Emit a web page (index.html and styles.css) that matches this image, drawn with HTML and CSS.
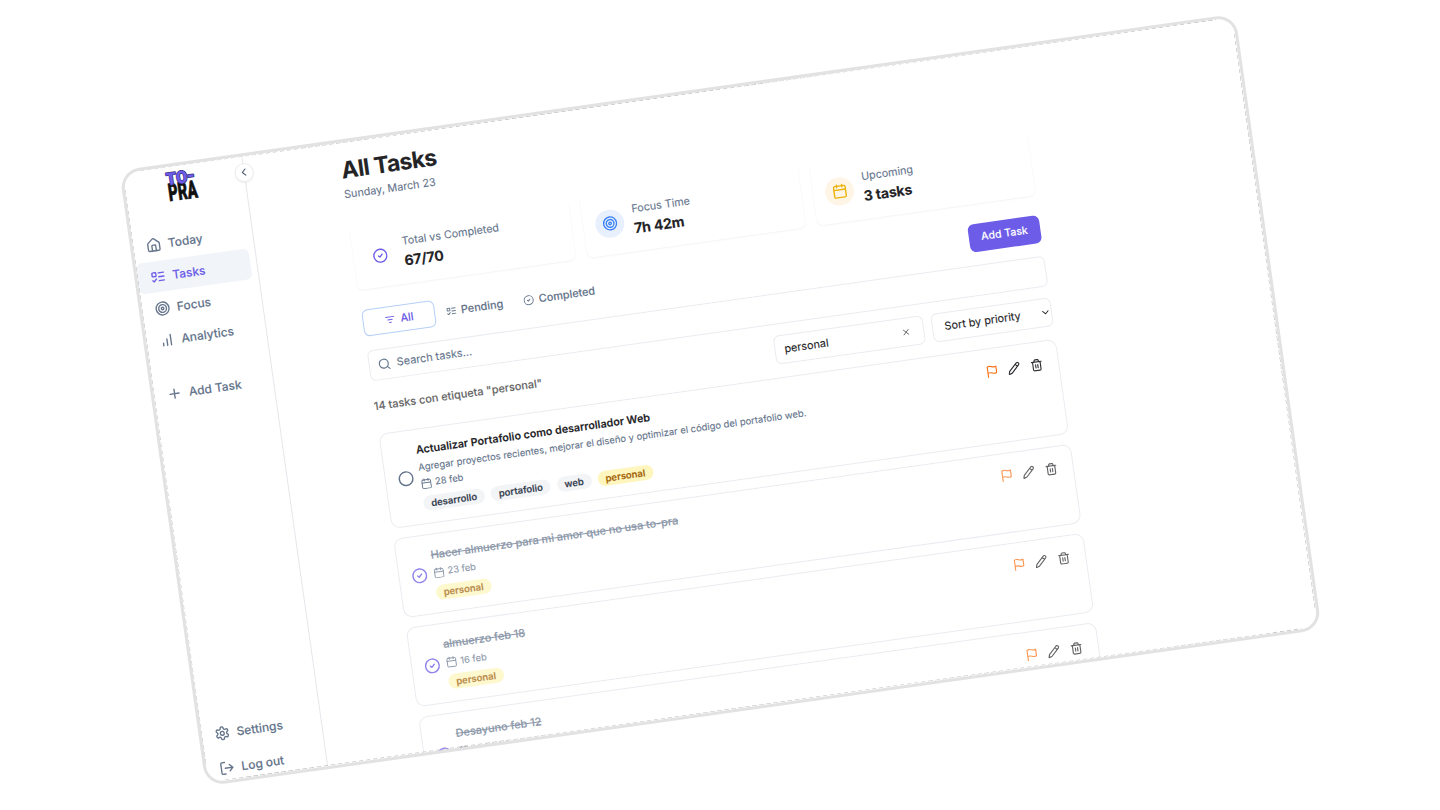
FILE: index.html
```html
<!DOCTYPE html>
<html lang="en">
<head>
<meta charset="utf-8">
<title>All Tasks</title>
<link rel="stylesheet" href="styles.css">
</head>
<body>
<svg class="sprite" aria-hidden="true">
  <symbol id="home" viewBox="0 0 24 24"><path d="M15 21v-8a1 1 0 0 0-1-1h-4a1 1 0 0 0-1 1v8"/><path d="M3 10a2 2 0 0 1 .709-1.528l7-5.999a2 2 0 0 1 2.582 0l7 5.999A2 2 0 0 1 21 10v9a2 2 0 0 1-2 2H5a2 2 0 0 1-2-2z"/></symbol>
  <symbol id="todo" viewBox="0 0 24 24"><rect x="3" y="5" width="6" height="6" rx="1"/><path d="m3 17 2 2 4-4M13 6h8M13 12h8M13 18h8"/></symbol>
  <symbol id="target" viewBox="0 0 24 24"><circle cx="12" cy="12" r="10"/><circle cx="12" cy="12" r="6"/><circle cx="12" cy="12" r="2"/></symbol>
  <symbol id="bars" viewBox="0 0 24 24"><path d="M12 20V10M18 20V4M6 20v-4"/></symbol>
  <symbol id="plus" viewBox="0 0 24 24"><path d="M5 12h14M12 5v14"/></symbol>
  <symbol id="gear" viewBox="0 0 24 24"><path d="M12.22 2h-.44a2 2 0 0 0-2 2v.18a2 2 0 0 1-1 1.73l-.43.25a2 2 0 0 1-2 0l-.15-.08a2 2 0 0 0-2.73.73l-.22.38a2 2 0 0 0 .73 2.73l.15.1a2 2 0 0 1 1 1.72v.51a2 2 0 0 1-1 1.74l-.15.09a2 2 0 0 0-.73 2.73l.22.38a2 2 0 0 0 2.73.73l.15-.08a2 2 0 0 1 2 0l.43.25a2 2 0 0 1 1 1.73V20a2 2 0 0 0 2 2h.44a2 2 0 0 0 2-2v-.18a2 2 0 0 1 1-1.73l.43-.25a2 2 0 0 1 2 0l.15.08a2 2 0 0 0 2.73-.73l.22-.39a2 2 0 0 0-.73-2.73l-.15-.08a2 2 0 0 1-1-1.74v-.5a2 2 0 0 1 1-1.74l.15-.09a2 2 0 0 0 .73-2.73l-.22-.38a2 2 0 0 0-2.73-.73l-.15.08a2 2 0 0 1-2 0l-.43-.25a2 2 0 0 1-1-1.73V4a2 2 0 0 0-2-2z"/><circle cx="12" cy="12" r="3"/></symbol>
  <symbol id="logout" viewBox="0 0 24 24"><path d="M9 21H5a2 2 0 0 1-2-2V5a2 2 0 0 1 2-2h4M16 17l5-5-5-5M21 12H9"/></symbol>
  <symbol id="check" viewBox="0 0 24 24"><circle cx="12" cy="12" r="10"/><path d="m9 12 2 2 4-4"/></symbol>
  <symbol id="circle" viewBox="0 0 24 24"><circle cx="12" cy="12" r="10"/></symbol>
  <symbol id="calendar" viewBox="0 0 24 24"><path d="M8 2v4M16 2v4M3 10h18"/><rect x="3" y="4" width="18" height="18" rx="2"/></symbol>
  <symbol id="filter" viewBox="0 0 24 24"><path d="M3 6h18M7 12h10M10 18h4"/></symbol>
  <symbol id="search" viewBox="0 0 24 24"><circle cx="11" cy="11" r="8"/><path d="m21 21-4.3-4.3"/></symbol>
  <symbol id="x" viewBox="0 0 24 24"><path d="M18 6 6 18M6 6l12 12"/></symbol>
  <symbol id="down" viewBox="0 0 24 24"><path d="m6 9 6 6 6-6"/></symbol>
  <symbol id="left" viewBox="0 0 24 24"><path d="m15 18-6-6 6-6"/></symbol>
  <symbol id="flag" viewBox="0 0 24 24"><path d="M4 15s1-1 4-1 5 2 8 2 4-1 4-1V3s-1 1-4 1-5-2-8-2-4 1-4 1zM4 22v-7"/></symbol>
  <symbol id="pencil" viewBox="0 0 24 24"><path d="M21.174 6.812a1 1 0 0 0-3.986-3.987L3.842 16.174a2 2 0 0 0-.5.83l-1.321 4.352a.5.5 0 0 0 .623.622l4.353-1.32a2 2 0 0 0 .83-.497zM15 5l4 4"/></symbol>
  <symbol id="trash" viewBox="0 0 24 24"><path d="M3 6h18M19 6v14c0 1-1 2-2 2H7c-1 0-2-1-2-2V6M8 6V4c0-1 1-2 2-2h4c1 0 2 1 2 2v2M10 11v6M14 11v6"/></symbol>
</svg>

<div class="frame">
  <aside class="sidebar">
    <svg class="logo" viewBox="0 0 36 36">
      <text class="logo-pra" x="2.6" y="31.6" textLength="29" lengthAdjust="spacingAndGlyphs">PRA</text>
      <text class="logo-to" x="2.4" y="15.2" textLength="21" lengthAdjust="spacingAndGlyphs">TO</text>
      <text class="logo-to" x="22.8" y="14.4" textLength="8.4" lengthAdjust="spacingAndGlyphs">-</text>
    </svg>
    <nav class="nav">
      <a class="nav-item"><svg class="icon"><use href="#home"/></svg>Today</a>
      <a class="nav-item active"><svg class="icon"><use href="#todo"/></svg>Tasks</a>
      <a class="nav-item"><svg class="icon"><use href="#target"/></svg>Focus</a>
      <a class="nav-item"><svg class="icon"><use href="#bars"/></svg>Analytics</a>
      <a class="nav-item add"><svg class="icon"><use href="#plus"/></svg>Add Task</a>
    </nav>
    <nav class="nav nav-bottom">
      <a class="nav-item"><svg class="icon"><use href="#gear"/></svg>Settings</a>
      <a class="nav-item"><svg class="icon"><use href="#logout"/></svg>Log out</a>
    </nav>
    <button class="toggle"><svg class="icon"><use href="#left"/></svg></button>
  </aside>

  <main class="main">
    <h1 class="title">All Tasks</h1>
    <p class="date">Sunday, March 23</p>

    <section class="stats">
      <div class="stat"><span class="badge"><svg class="icon violet"><use href="#check"/></svg></span><div><p class="label">Total vs Completed</p><p class="value">67/70</p></div></div>
      <div class="stat"><span class="badge blue"><svg class="icon"><use href="#target"/></svg></span><div><p class="label">Focus Time</p><p class="value">7h 42m</p></div></div>
      <div class="stat"><span class="badge amber"><svg class="icon"><use href="#calendar"/></svg></span><div><p class="label">Upcoming</p><p class="value">3 tasks</p></div></div>
    </section>

    <div class="toolbar">
      <div class="tabs">
        <button class="tab selected"><svg class="icon"><use href="#filter"/></svg>All</button>
        <button class="tab"><svg class="icon"><use href="#todo"/></svg>Pending</button>
        <button class="tab"><svg class="icon"><use href="#check"/></svg>Completed</button>
      </div>
      <button class="primary">Add Task</button>
    </div>

    <div class="search"><svg class="icon"><use href="#search"/></svg>Search tasks...</div>

    <div class="filters">
      <p class="count">14 tasks con etiqueta "personal"</p>
      <div class="tag-filter">personal<svg class="icon"><use href="#x"/></svg></div>
      <div class="sort">Sort by priority<svg class="icon"><use href="#down"/></svg></div>
    </div>

    <section class="list">
      <article class="task">
        <svg class="icon state"><use href="#circle"/></svg>
        <div class="body">
          <h2 class="name">Actualizar Portafolio como desarrollador Web</h2>
          <p class="desc">Agregar proyectos recientes, mejorar el diseño y optimizar el código del portafolio web.</p>
          <p class="due"><svg class="icon"><use href="#calendar"/></svg>28 feb</p>
          <div class="tags"><span class="tag">desarrollo</span><span class="tag">portafolio</span><span class="tag">web</span><span class="tag hit">personal</span></div>
        </div>
        <div class="actions"><svg class="icon flag"><use href="#flag"/></svg><svg class="icon"><use href="#pencil"/></svg><svg class="icon"><use href="#trash"/></svg></div>
      </article>
      <article class="task done">
        <svg class="icon state"><use href="#check"/></svg>
        <div class="body">
          <h2 class="name">Hacer almuerzo para mi amor que no usa to-pra</h2>
          <p class="due"><svg class="icon"><use href="#calendar"/></svg>23 feb</p>
          <div class="tags"><span class="tag hit">personal</span></div>
        </div>
        <div class="actions"><svg class="icon flag"><use href="#flag"/></svg><svg class="icon"><use href="#pencil"/></svg><svg class="icon"><use href="#trash"/></svg></div>
      </article>
      <article class="task done">
        <svg class="icon state"><use href="#check"/></svg>
        <div class="body">
          <h2 class="name">almuerzo feb 18</h2>
          <p class="due"><svg class="icon"><use href="#calendar"/></svg>16 feb</p>
          <div class="tags"><span class="tag hit">personal</span></div>
        </div>
        <div class="actions"><svg class="icon flag"><use href="#flag"/></svg><svg class="icon"><use href="#pencil"/></svg><svg class="icon"><use href="#trash"/></svg></div>
      </article>
      <article class="task done">
        <svg class="icon state"><use href="#check"/></svg>
        <div class="body">
          <h2 class="name">Desayuno feb 12</h2>
          <p class="due"><svg class="icon"><use href="#calendar"/></svg>12 feb</p>
          <div class="tags"><span class="tag hit">personal</span></div>
        </div>
        <div class="actions"><svg class="icon flag"><use href="#flag"/></svg><svg class="icon"><use href="#pencil"/></svg><svg class="icon"><use href="#trash"/></svg></div>
      </article>
    </section>
  </main>
</div>
</body>
</html>
```
FILE: styles.css
```css
* { box-sizing: border-box; margin: 0; padding: 0; }

body {
  height: 810px;
  padding: 88.75px 0 0 156.75px;
  overflow: hidden;
  background: #fff;
  font-family: Inter, "Liberation Sans", sans-serif;
  font-size: 10.88px;
  line-height: 15.5px;
  color: #242427;
  -webkit-text-stroke: .1px currentColor;
}

button { font: inherit; border: 0; background: none; color: inherit; }
.sprite { display: none; }

.icon {
  flex: none;
  width: 15.5px;
  height: 15.5px;
  fill: none;
  stroke: currentColor;
  stroke-width: 2.1;
  stroke-linecap: round;
  stroke-linejoin: round;
}

.frame {
  position: relative;
  display: flex;
  width: 1127px;
  height: 622px;
  border: 3px solid #e2e2e2;
  border-radius: 20px;
  overflow: hidden;
  background: #fff;
  transform: rotate(-8deg);
}

/* fine dashes along the inside of the border */
.frame::after {
  content: "";
  position: absolute;
  inset: 0;
  pointer-events: none;
  --h: repeating-linear-gradient(90deg, #bcbcbc 0 4.4px, transparent 4.4px 7.1px);
  --v: repeating-linear-gradient(#bcbcbc 0 4.4px, transparent 4.4px 7.1px);
  background:
    var(--h) 17px 0 / calc(100% - 34px) .6px no-repeat,
    var(--h) 17px 100% / calc(100% - 34px) .6px no-repeat,
    var(--v) 0 17px / .6px calc(100% - 34px) no-repeat,
    var(--v) 100% 17px / .6px calc(100% - 34px) no-repeat;
}

.sidebar {
  position: relative;
  display: flex;
  flex-direction: column;
  flex: none;
  width: 121px;
  height: 616px;
  border-right: 1px solid #e5e7eb;
}

.logo { width: 36px; height: 36px; margin: 2.5px 0 0 40px; overflow: visible; }
.logo text { font-family: Roboto, Inter, sans-serif; font-weight: 900; }
.logo-pra { font-size: 24.5px; fill: #111; stroke: #111; stroke-width: .7; }
.logo-to { font-size: 17px; fill: #6c5ce7; stroke: #3a3380; stroke-width: 1.5; paint-order: stroke; stroke-linejoin: round; }

.nav { display: flex; flex-direction: column; gap: 1px; padding-right: 6.5px; margin-top: 21.8px; color: #64748b; }
.nav-item {
  display: flex;
  align-items: center;
  gap: 6.5px;
  height: 31px;
  padding-left: 13.2px;
  border-radius: 6px;
  font-size: 11.95px;
  font-weight: 450;
  line-height: 18px;
}
.nav-item.active { background: #f1f5f9; color: #6c5ce7; }
.nav-item.add { margin-top: 21.8px; }
.nav-bottom { gap: 4px; margin-top: auto; margin-bottom: -3px; }

.toggle {
  position: absolute;
  top: 7px;
  right: -9.5px;
  display: flex;
  align-items: center;
  justify-content: center;
  width: 19px;
  height: 19px;
  border: 1px solid #eceef1;
  border-radius: 50%;
  background: #fff;
  box-shadow: 0 1px 2px rgb(0 0 0 / .06);
  color: #475569;
}
.toggle .icon { width: 12.4px; height: 12.4px; }

.main { flex: none; width: 683.5px; margin-left: 96.1px; padding-top: 13.6px; }
.title { font-size: 22.8px; line-height: 28px; font-weight: 700; letter-spacing: -.022em; }
.date { margin-top: 3.8px; margin-left: -.6px; font-size: 10.75px; color: #64748b; }

.stats { display: grid; grid-template-columns: repeat(3, 1fr); gap: 12.4px; margin-top: 25.2px; }
.stat {
  display: flex;
  align-items: center;
  gap: 9.2px;
  height: 63.2px;
  padding-left: 12.3px;
  padding-top: .6px;
  border-radius: 6px;
  box-shadow: 0 .8px 2px rgb(0 0 0 / .06);
}
.badge { display: flex; align-items: center; justify-content: center; width: 28.4px; height: 28.4px; border-radius: 50%; }
.badge.blue { background: #e8f0fe; color: #3b82f6; }
.badge.amber { background: #fef5e7; color: #eab308; }
.violet { color: #6c5ce7; }
.label { font-size: 10.78px; color: #64748b; }
.value { font-size: 14.1px; line-height: 21.7px; font-weight: 700; letter-spacing: -.014em; }

.toolbar { display: flex; justify-content: space-between; margin-top: 19.7px; }
.tabs { display: flex; }
.tab { display: flex; align-items: center; gap: 4.3px; height: 26.8px; padding-left: 10.8px; padding-top: 1px; font-weight: 500; color: #64748b; }
.tab + .tab + .tab { padding-left: 20.8px; }
.tab .icon { width: 10.9px; height: 10.9px; }
.tab.selected {
  justify-content: center;
  gap: 5px;
  width: 73px;
  padding: .6px 0 0;
  border: 1px solid #b4d0f7;
  border-radius: 6px;
  color: #6c5ce7;
}
.primary {
  width: 71.5px;
  height: 28.2px;
  margin-top: -.4px;
  padding-top: .8px;
  border-radius: 6px;
  background: #6c5ce7;
  color: #fff;
  font-size: 10.6px;
  font-weight: 450;
}

.search {
  display: flex;
  align-items: center;
  gap: 6px;
  height: 31px;
  margin-top: 13.2px;
  padding-left: 7.8px;
  padding-top: .8px;
  border: 1px solid #e9ecf0;
  border-radius: 6px;
  color: #64748b;
}
.search .icon { width: 13.4px; height: 13.4px; }

.filters { display: flex; align-items: center; gap: 7.8px; height: 30px; margin-top: 10.4px; }
.count { flex: 1; margin-left: -.6px; font-weight: 500; color: #666; font-size: 10.95px; }
.tag-filter, .sort {
  display: flex;
  align-items: center;
  justify-content: space-between;
  border: 1px solid #e9ecf0;
  border-radius: 6px;
}
.tag-filter { width: 151.4px; height: 29.5px; padding: 0 12.2px 0 9.3px; }
.tag-filter .icon { width: 9.4px; height: 9.4px; color: #555; }
.sort { width: 120.8px; height: 28.6px; padding: .6px .1px 0 11.8px; }
.sort .icon { width: 11px; height: 11px; }

.list { display: flex; flex-direction: column; gap: 10.2px; margin-top: 13px; }
.task {
  display: flex;
  align-items: center;
  height: 95.4px;
  padding: 1px 15.1px 0 11.6px;
  border: 1px solid #e9ecf0;
  border-radius: 9px;
}
.task.done { height: 80.1px; }
.state { width: 16.4px; height: 16.4px; color: #64748b; }
.body { flex: 1; margin-left: 5.8px; }
.name { font-size: 10.78px; line-height: 15.5px; font-weight: 600; }
.desc { margin-top: 3.4px; font-size: 9.47px; line-height: 12.4px; color: #64748b; white-space: nowrap; }
.due { display: flex; align-items: center; gap: 3.1px; margin-top: 4px; font-size: 9.35px; line-height: 12.4px; color: #64748b; }
.due .icon { width: 11.6px; height: 11.6px; stroke-width: 1.9; }
.tags { display: flex; gap: 6.4px; margin-top: 6px; }
.tag { height: 15.5px; padding: 0 7.8px; border-radius: 8px; background: #f3f4f6; color: #374151; font-size: 9.5px; line-height: 15.5px; font-weight: 600; }
.tag.hit { background: #fef6bd; color: #a16207; }
.actions { display: flex; align-self: flex-start; gap: 9.2px; margin-top: 14.2px; color: #2f2f33; }
.actions .icon { width: 13px; height: 13px; }
.actions .flag { color: #f97316; }

.done .state { color: #6c5ce7; }
.done .state, .done .body, .done .actions { opacity: .74; }
.done .name { font-size: 10.95px; font-weight: 500; color: #64748b; text-decoration: line-through; }
```
